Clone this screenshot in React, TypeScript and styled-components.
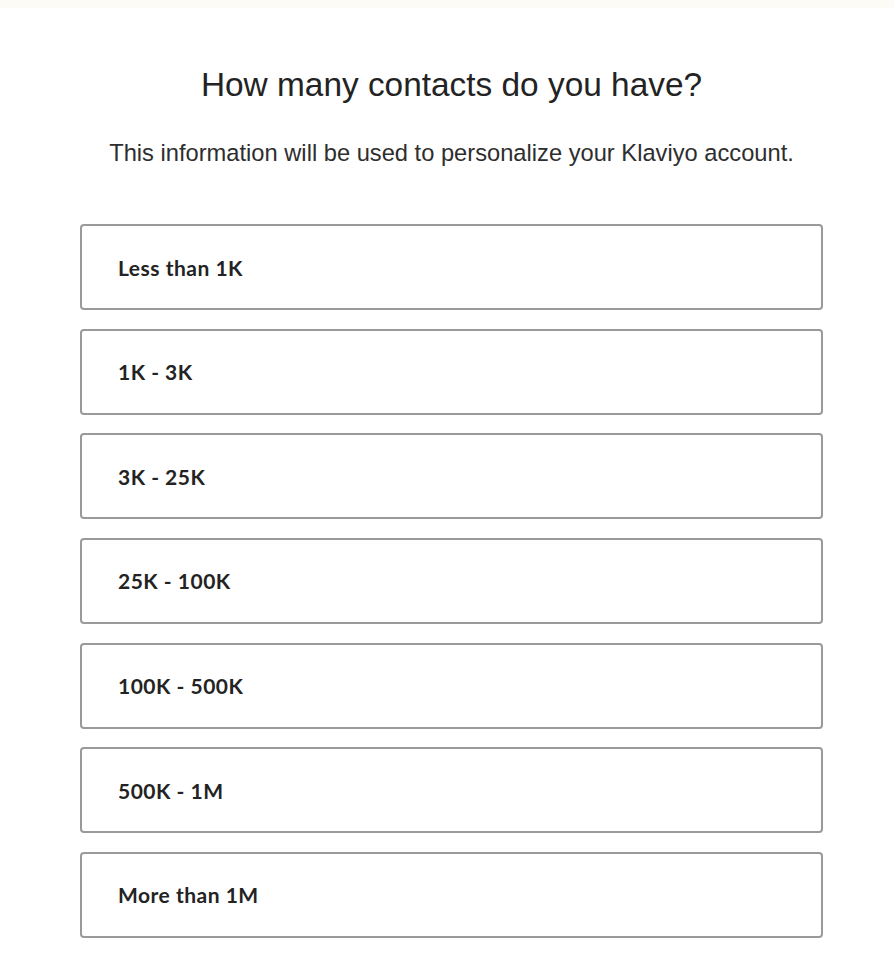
import styled, { createGlobalStyle } from "styled-components";

const options = [
  "Less than 1K",
  "1K - 3K",
  "3K - 25K",
  "25K - 100K",
  "100K - 500K",
  "500K - 1M",
  "More than 1M",
];

function App() {
  return (
    <>
      <GlobalStyle />
      <TopStrip />
      <Page>
        <Title>How many contacts do you have?</Title>
        <Subtitle>This information will be used to personalize your Klaviyo account.</Subtitle>
        <OptionList>
          {options.map((label) => (
            <Option key={label} type="button">
              {label}
            </Option>
          ))}
        </OptionList>
      </Page>
    </>
  );
}
export default App;

const GlobalStyle = createGlobalStyle`
  * {
    box-sizing: border-box;
  }
  body {
    margin: 0;
    background: #ffffff;
    font-family: "Liberation Sans", Arial, sans-serif;
  }
`
const TopStrip = styled.div`
  height: 8px;
  background: #fdfbf6;
`
const Page = styled.main`
  padding: 58px 71px 0 80px;
  display: flex;
  flex-direction: column;
  align-items: stretch;
`
const Title = styled.h1`
  margin: 0;
  text-align: center;
  font-size: 33.4px;
  line-height: 38px;
  font-weight: 400;
  color: #232323;
`
const Subtitle = styled.p`
  margin: 36px 0 0;
  text-align: center;
  font-size: 23.7px;
  line-height: 27px;
  color: #2e2e2e;
`
const OptionList = styled.div`
  margin-top: 57px;
  display: flex;
  flex-direction: column;
  gap: 18.67px;
`
const Option = styled.button`
  height: 86px;
  width: 100%;
  padding: 0 0 0 36px;
  display: flex;
  align-items: center;
  background: #ffffff;
  border: 2px solid #9a9a9a;
  border-radius: 4px;
  font-family: Lato, "Liberation Sans", sans-serif;
  font-size: 21px;
  font-weight: 700;
  letter-spacing: 0.5px;
  color: #232323;
  text-align: left;
  cursor: pointer;
`
